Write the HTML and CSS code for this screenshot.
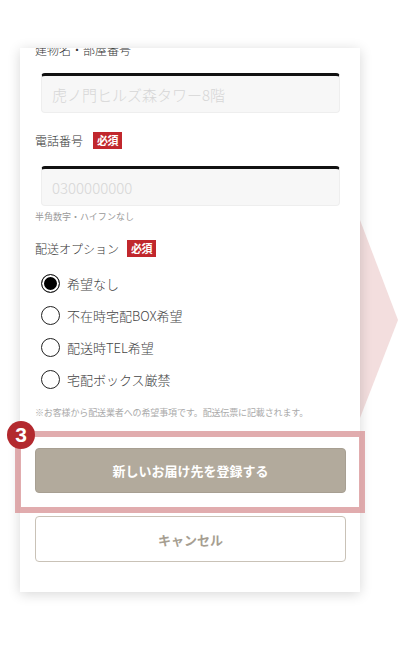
FILE: index.html
```html
<!DOCTYPE html>
<html lang="ja">
<head>
  <meta charset="UTF-8">
  <title>お届け先の登録</title>
  <link rel="stylesheet" href="styles.css">
</head>
<body>
  <div class="stage">
    <!-- 次のステップへの矢印 -->
    <svg class="next-arrow" width="60" height="220" viewBox="0 0 60 220">
      <polygon points="0,0 38,100 0,198" fill="#f3dede"/>
    </svg>

    <div class="card">
      <p class="field-label first">建物名・部屋番号</p>
      <input class="text-input" type="text" placeholder="虎ノ門ヒルズ森タワー8階">

      <div class="label-row">
        <span class="field-label">電話番号</span>
        <span class="required">必須</span>
      </div>
      <input class="text-input tel" type="text" placeholder="0300000000">
      <p class="hint">半角数字・ハイフンなし</p>

      <div class="label-row option-label">
        <span class="field-label">配送オプション</span>
        <span class="required">必須</span>
      </div>
      <ul class="radio-list">
        <li><label><input type="radio" name="delivery" checked><span>希望なし</span></label></li>
        <li><label><input type="radio" name="delivery"><span>不在時宅配BOX希望</span></label></li>
        <li><label><input type="radio" name="delivery"><span>配送時TEL希望</span></label></li>
        <li><label><input type="radio" name="delivery"><span>宅配ボックス厳禁</span></label></li>
      </ul>
      <p class="note">※お客様から配送業者への希望事項です。配送伝票に記載されます。</p>

      <button class="submit-btn">新しいお届け先を登録する</button>
      <button class="cancel-btn">キャンセル</button>
    </div>

    <!-- 手順の強調 -->
    <div class="highlight"></div>
    <span class="step-num">3</span>
  </div>
</body>
</html>
```

FILE: styles.css
```css
body {
  margin: 0;
  background-color: #fff;
  font-family: "Noto Sans CJK JP", "Noto Sans", sans-serif;
}

.stage {
  position: relative;
  width: 400px;
  height: 650px;
  overflow: hidden;
  padding-top: 48px;
  box-sizing: border-box;
}

.next-arrow {
  position: absolute;
  left: 360px;
  top: 220px;
}

.card {
  position: relative;
  width: 340px;
  margin-left: 20px;
  height: 544px;
  padding: 0 15px;
  box-sizing: border-box;
  background-color: #fff;
  overflow: hidden;
  box-shadow: 0 2px 12px rgba(0, 0, 0, 0.16);
}

.field-label {
  margin: 0;
  font-size: 12px;
  font-weight: 300;
  line-height: 18px;
  color: #333;
}

.field-label.first {
  margin-top: -7px;
}

.text-input {
  display: block;
  width: 299px;
  height: 40px;
  margin: 14px 0 0 6px;
  padding: 0 10px;
  box-sizing: border-box;
  border: 1px solid #eee;
  border-top: 3px solid #111;
  border-radius: 4px;
  background-color: #f7f7f7;
  font-family: inherit;
  font-size: 15px;
  font-weight: 300;
}

.text-input::placeholder {
  color: #d6d6d6;
}

.text-input.tel {
  margin-top: 17px;
}

.label-row {
  display: flex;
  align-items: center;
  gap: 10px;
  margin-top: 19px;
  height: 17px;
}

.label-row.option-label {
  margin-top: 17px;
  gap: 8px;
}

.required {
  display: inline-block;
  width: 29px;
  height: 17px;
  line-height: 17px;
  text-align: center;
  background-color: #c1272d;
  color: #fff;
  font-size: 11px;
  font-weight: bold;
  letter-spacing: -0.5px;
}

.hint {
  margin: 4px 0 0;
  font-size: 9px;
  line-height: 13px;
  color: #999;
}

.radio-list {
  list-style: none;
  margin: 10px 0 0 6px;
  padding: 0;
}

.radio-list li {
  height: 32px;
  display: flex;
  align-items: center;
}

.radio-list label {
  display: flex;
  align-items: center;
  gap: 7px;
  font-size: 13px;
  font-weight: 300;
  color: #444;
}

.radio-list input {
  appearance: none;
  width: 19px;
  height: 19px;
  margin: 0;
  border: 1.5px solid #222;
  border-radius: 50%;
  background-color: #fff;
}

.radio-list input:checked {
  background-color: #000;
  box-shadow: inset 0 0 0 2px #fff;
}

.note {
  margin: 11px 0 0;
  font-size: 9px;
  letter-spacing: -0.13px;
  line-height: 13px;
  color: #aaa;
  white-space: nowrap;
}

.submit-btn,
.cancel-btn {
  display: block;
  width: 311px;
  height: 45px;
  border-radius: 4px;
  font-family: inherit;
  font-size: 13px;
  font-weight: bold;
  cursor: pointer;
}

.submit-btn {
  margin-top: 29px;
  background-color: #b2aa9c;
  border: 1px solid #a79f92;
  color: #fff;
}

.cancel-btn {
  margin-top: 23px;
  height: 46px;
  background-color: #fff;
  border: 1px solid #c9c2b7;
  color: #a69e91;
}

.highlight {
  position: absolute;
  left: 15px;
  top: 431px;
  width: 350px;
  height: 82px;
  box-sizing: border-box;
  border: 6px solid rgba(214, 140, 143, 0.72);
}

.step-num {
  position: absolute;
  left: 7px;
  top: 421px;
  width: 28px;
  height: 28px;
  border-radius: 50%;
  background-color: #b3292e;
  color: #fff;
  font-family: "Liberation Sans", Arial, sans-serif;
  font-size: 21px;
  font-weight: bold;
  line-height: 28px;
  text-align: center;
}
```
